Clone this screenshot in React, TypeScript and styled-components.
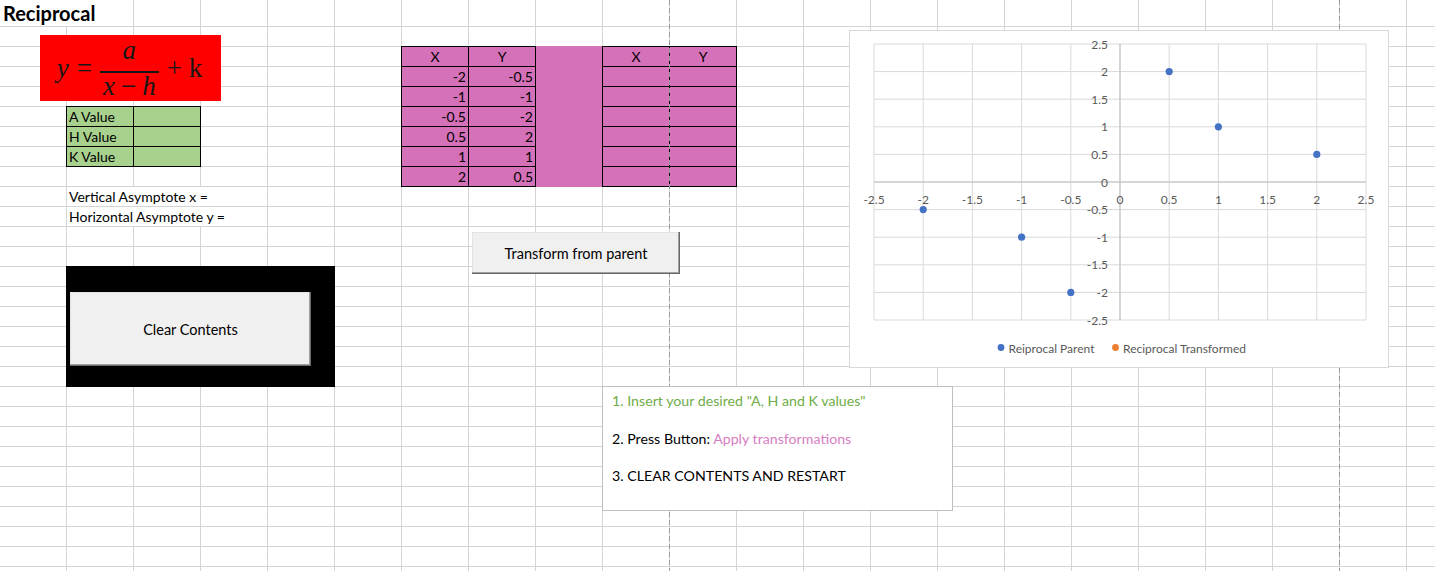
import React from "react";
import styled, { createGlobalStyle } from "styled-components";

const GRID = "#d4d4d4";
const PURPLE = "#d571b8";
const GREEN = "#a9d18e";
const CELL_FONT = `Lato, "Open Sans", sans-serif`;

const GlobalStyle = createGlobalStyle`
  html, body {
    margin: 0;
    padding: 0;
    background: #fff;
  }
  body {
    overflow: hidden;
    font-family: ${CELL_FONT};
  }
`;

const Sheet = styled.div`
  position: relative;
  width: 1435px;
  height: 571px;
  overflow: hidden;
  display: grid;
  grid-template-columns: repeat(22, 67px);
  grid-template-rows: 27px repeat(28, 20px);
  background-color: #fff;
  background-image: linear-gradient(to right, transparent 66px, ${GRID} 66px),
    linear-gradient(#fff, #fff),
    linear-gradient(to bottom, transparent 19px, ${GRID} 19px);
  background-size: 67px 100%, 100% 1px, 100% 20px;
  background-position: 0 0, 0 6px, 0 7px;
  background-repeat: repeat, no-repeat, repeat;
  font-family: ${CELL_FONT};
  font-size: 14px;
  color: #000;
`;

const Cell = styled.div<{ $col: number; $row: number; $span?: number; $rows?: number }>`
  grid-column: ${(p) => p.$col} / span ${(p) => p.$span ?? 1};
  grid-row: ${(p) => p.$row} / span ${(p) => p.$rows ?? 1};
  min-width: 0;
  box-sizing: border-box;
`;

/* text that spills over neighbouring cells hides their gridlines */
const SpillCell = styled(Cell)`
  background: #fff;
  border-right: 1px solid ${GRID};
  border-bottom: 1px solid ${GRID};
  padding: 1px 0 0 2px;
  line-height: 18px;
  white-space: nowrap;
`;

const Title = styled(SpillCell)`
  padding: 2px 0 0 3px;
  font-size: 20px;
  font-weight: 700;
  line-height: 22px;
`;

const BoxCell = styled(Cell)<{ $fill: string; $align?: string }>`
  margin: -1px 0 0 -1px;
  border: 1px solid #000;
  background: ${(p) => p.$fill};
  padding: 1px 2px 0 2px;
  line-height: 18px;
  text-align: ${(p) => p.$align ?? "left"};
  white-space: nowrap;
`;

const FillCell = styled(Cell)<{ $fill: string }>`
  margin-top: -1px;
  background: ${(p) => p.$fill};
`;

const PageBreak = styled.div<{ $x: number }>`
  position: absolute;
  top: 0;
  left: ${(p) => p.$x}px;
  width: 1px;
  height: 100%;
  background: repeating-linear-gradient(to bottom, #9a9a9a 0 5px, transparent 5px 8px);
`;

const FormulaBox = styled.div`
  position: absolute;
  left: 40px;
  top: 35px;
  width: 181px;
  height: 66px;
  padding-right: 2px;
  box-sizing: border-box;
  background: #ff0000;
  display: flex;
  align-items: center;
  justify-content: center;
  gap: 8px;
  font-family: "Liberation Serif", "DejaVu Serif", serif;
  font-size: 27px;
  color: #161616;
`;

const MathVar = styled.span`
  font-style: italic;
`;

const Fraction = styled.span`
  display: inline-flex;
  flex-direction: column;
  align-items: center;
  line-height: 22px;
`;

const Numerator = styled.span`
  padding-bottom: 10px;
  border-bottom: 2px solid #161616;
  align-self: stretch;
  text-align: center;
  font-style: italic;
`;

const Denominator = styled.span`
  padding: 2px 3px 0;
`;

const Operator = styled.span`
  margin: 0 6px;
`;

const ClearFrame = styled.div`
  position: absolute;
  left: 66px;
  top: 266px;
  width: 269px;
  height: 121px;
  padding: 26px 0 0 4px;
  box-sizing: border-box;
  background: #000;
`;

const FormButton = styled.button<{ $w: number; $h: number }>`
  width: ${(p) => p.$w}px;
  height: ${(p) => p.$h}px;
  margin: 0;
  padding: 0;
  border: none;
  background: #f0f0f0;
  box-shadow: inset -1px -1px 0 #696969, inset -2px -2px 0 #a0a0a0, inset 1px 1px 0 #e3e3e3;
  font-family: ${CELL_FONT};
  font-size: 14.5px;
  color: #000;
`;

const TransformSpot = styled.div`
  position: absolute;
  left: 472px;
  top: 232px;
`;

const ChartFrame = styled.div`
  position: absolute;
  left: 849px;
  top: 30px;
  width: 540px;
  height: 338px;
  box-sizing: border-box;
  border: 1px solid #d9d9d9;
  background: #fff;
  svg {
    display: block;
  }
`;

const NoteBox = styled.div`
  position: absolute;
  left: 602px;
  top: 386px;
  width: 351px;
  height: 125px;
  box-sizing: border-box;
  border: 1px solid #bfbfbf;
  background: #fff;
  padding: 4px 10px 0 9px;
  display: flex;
  flex-direction: column;
  gap: 18.5px;
  font-size: 14.2px;
  line-height: 19px;
`;

const NoteLine = styled.div<{ $color?: string }>`
  color: ${(p) => p.$color ?? "#000"};
  white-space: nowrap;
`;

const Accent = styled.span`
  color: #d57ec2;
`;

const parent: [string, string][] = [
  ["-2", "-0.5"],
  ["-1", "-1"],
  ["-0.5", "-2"],
  ["0.5", "2"],
  ["1", "1"],
  ["2", "0.5"],
];

const points = [
  [-2, -0.5],
  [-1, -1],
  [-0.5, -2],
  [0.5, 2],
  [1, 1],
  [2, 0.5],
];

const ticks = [-2.5, -2, -1.5, -1, -0.5, 0, 0.5, 1, 1.5, 2, 2.5];

// plot area in page coordinates
const PX0 = 874;
const PY0 = 44;
const PW = 492;
const PH = 276;
const sx = (v: number) => PX0 + ((v + 2.5) / 5) * PW;
const sy = (v: number) => PY0 + ((2.5 - v) / 5) * PH;

function Chart() {
  return (
    <ChartFrame>
      <svg width={538} height={336}>
        <g transform="translate(-850,-31)" fontFamily={CELL_FONT} fontSize={12} fill="#595959">
          {ticks.map((t) => (
            <line key={"v" + t} x1={sx(t)} x2={sx(t)} y1={PY0} y2={PY0 + PH} stroke="#d9d9d9" />
          ))}
          {ticks.map((t) => (
            <line key={"h" + t} x1={PX0} x2={PX0 + PW} y1={sy(t)} y2={sy(t)} stroke="#d9d9d9" />
          ))}
          <line x1={sx(0)} x2={sx(0)} y1={PY0} y2={PY0 + PH} stroke="#bfbfbf" />
          <line x1={PX0} x2={PX0 + PW} y1={sy(0)} y2={sy(0)} stroke="#bfbfbf" />
          {ticks.map((t) => (
            <text key={"yl" + t} x={sx(0) - 12} y={sy(t)} textAnchor="end" dominantBaseline="central">
              {t}
            </text>
          ))}
          {ticks.map((t) => (
            <text key={"xl" + t} x={sx(t)} y={sy(0) + 17} textAnchor="middle" dominantBaseline="central">
              {t}
            </text>
          ))}
          {points.map(([x, y]) => (
            <circle key={x} cx={sx(x)} cy={sy(y)} r={3.6} fill="#4472c4" />
          ))}
          <circle cx={1001} cy={347.5} r={3.4} fill="#4472c4" />
          <text x={1008.5} y={348} dominantBaseline="central">
            Reiprocal Parent
          </text>
          <circle cx={1115.5} cy={347.5} r={3.4} fill="#ed7d31" />
          <text x={1123} y={348} dominantBaseline="central">
            Reciprocal Transformed
          </text>
        </g>
      </svg>
    </ChartFrame>
  );
}

export default function App() {
  return (
    <>
      <GlobalStyle />
      <Sheet>
        <Title $col={1} $row={1} $span={2}>
          Reciprocal
        </Title>

        <BoxCell $col={2} $row={6} $fill={GREEN}>A Value</BoxCell>
        <BoxCell $col={3} $row={6} $fill={GREEN} />
        <BoxCell $col={2} $row={7} $fill={GREEN}>H Value</BoxCell>
        <BoxCell $col={3} $row={7} $fill={GREEN} />
        <BoxCell $col={2} $row={8} $fill={GREEN}>K Value</BoxCell>
        <BoxCell $col={3} $row={8} $fill={GREEN} />

        <SpillCell $col={2} $row={10} $span={3}>
          Vertical Asymptote x =
        </SpillCell>
        <SpillCell $col={2} $row={11} $span={3}>
          Horizontal Asymptote y =
        </SpillCell>

        <BoxCell $col={7} $row={3} $fill={PURPLE} $align="center">X</BoxCell>
        <BoxCell $col={8} $row={3} $fill={PURPLE} $align="center">Y</BoxCell>
        {parent.map(([x, y], i) => (
          <React.Fragment key={"p" + i}>
            <BoxCell $col={7} $row={4 + i} $fill={PURPLE} $align="right">{x}</BoxCell>
            <BoxCell $col={8} $row={4 + i} $fill={PURPLE} $align="right">{y}</BoxCell>
          </React.Fragment>
        ))}
        <FillCell $col={9} $row={3} $rows={7} $fill={PURPLE} />
        <BoxCell $col={10} $row={3} $fill={PURPLE} $align="center">X</BoxCell>
        <BoxCell $col={11} $row={3} $fill={PURPLE} $align="center">Y</BoxCell>
        {parent.map((_, i) => (
          <React.Fragment key={"t" + i}>
            <BoxCell $col={10} $row={4 + i} $fill={PURPLE} />
            <BoxCell $col={11} $row={4 + i} $fill={PURPLE} />
          </React.Fragment>
        ))}

        <PageBreak $x={669} />
        <PageBreak $x={1339} />

        <FormulaBox>
          <MathVar>y</MathVar>
          <span>=</span>
          <Fraction>
            <Numerator>a</Numerator>
            <Denominator>
              <MathVar>x</MathVar>
              <Operator>−</Operator>
              <MathVar>h</MathVar>
            </Denominator>
          </Fraction>
          <span>+ k</span>
        </FormulaBox>

        <ClearFrame>
          <FormButton $w={241} $h={74}>Clear Contents</FormButton>
        </ClearFrame>

        <TransformSpot>
          <FormButton $w={208} $h={42}>Transform from parent</FormButton>
        </TransformSpot>

        <Chart />

        <NoteBox>
          <NoteLine $color="#70ad47">1. Insert your desired "A, H and K values"</NoteLine>
          <NoteLine>
            2. Press Button: <Accent>Apply transformations</Accent>
          </NoteLine>
          <NoteLine>3. CLEAR CONTENTS AND RESTART</NoteLine>
        </NoteBox>
      </Sheet>
    </>
  );
}
